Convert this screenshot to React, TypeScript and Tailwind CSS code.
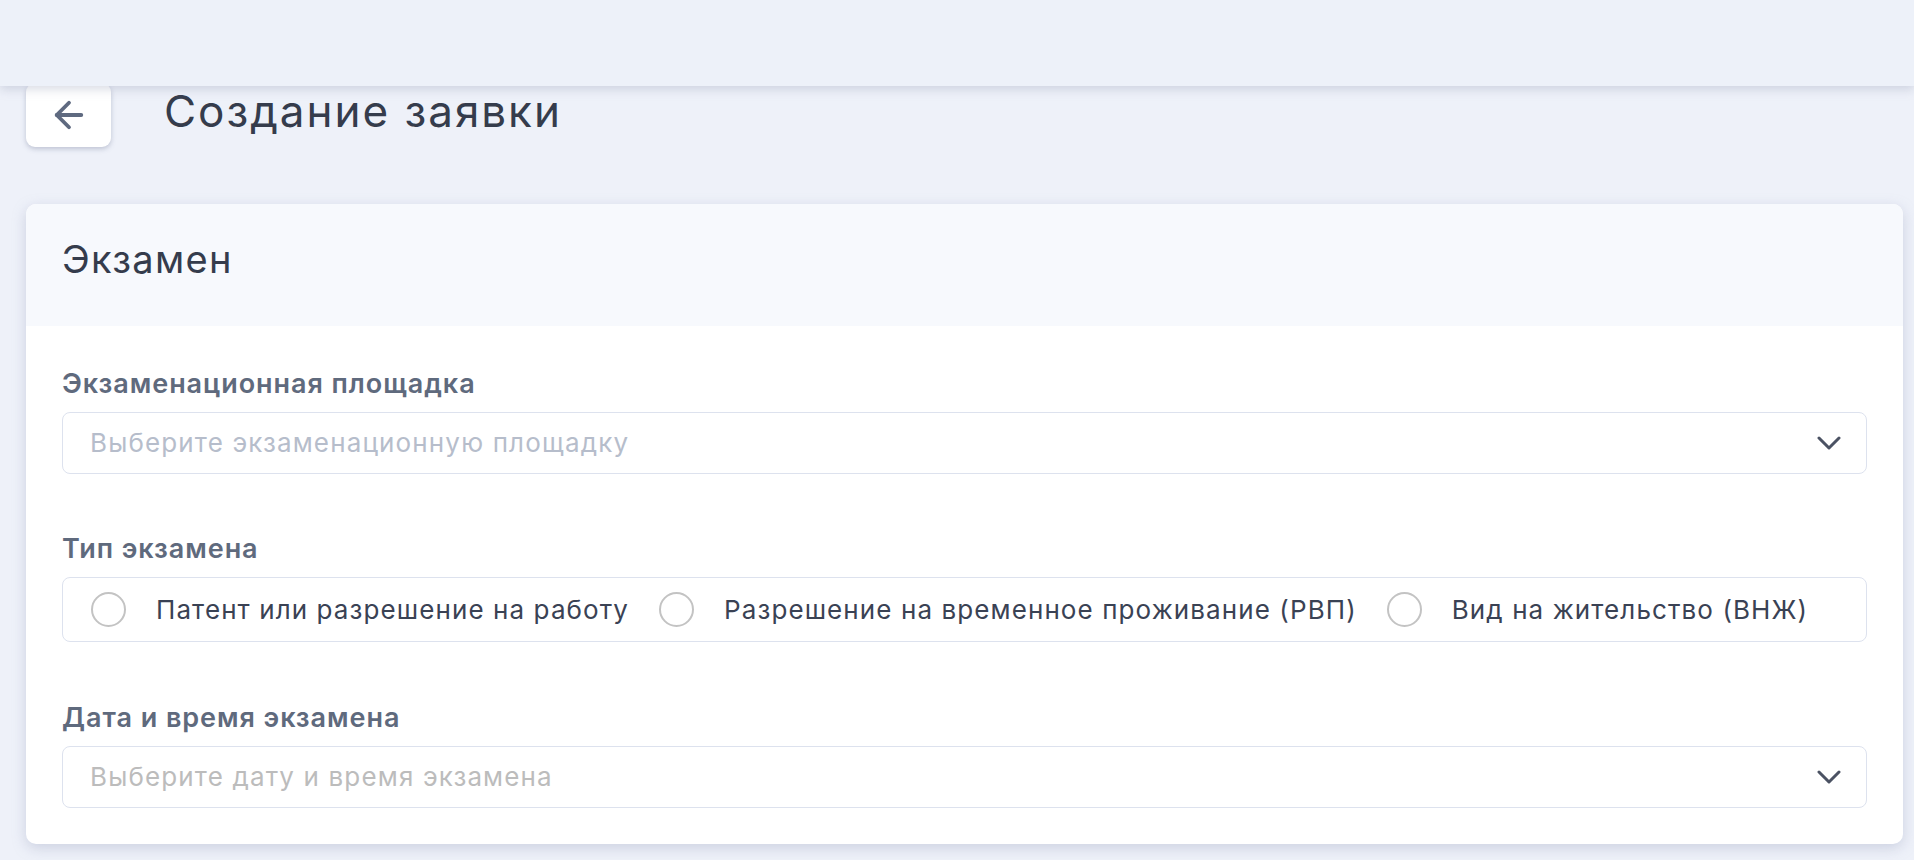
import { ArrowLeft } from 'lucide-react'

function Chevron() {
  return (
    <svg width="24" height="14" viewBox="0 0 24 14" fill="none" className="shrink-0">
      <path d="M2 2l10 10L22 2" stroke="#4b5263" strokeWidth="3" strokeLinecap="round" strokeLinejoin="round" />
    </svg>
  )
}

function Label({ children }: { children: React.ReactNode }) {
  return (
    <div className="mb-[12px] text-[27px] leading-[32px] font-semibold tracking-[0.035em] text-[#5f6a7d]">{children}</div>
  )
}

function SelectBox({ placeholder, tone }: { placeholder: string; tone: string }) {
  return (
    <div className="flex h-[62px] items-center justify-between rounded-[8px] border border-[#dde2ee] bg-white pr-[25px] pl-[27px]">
      <span className={`text-[26px] leading-[32px] tracking-[0.044em] ${tone}`}>{placeholder}</span>
      <Chevron />
    </div>
  )
}

const types = ['Патент или разрешение на работу', 'Разрешение на временное проживание (РВП)', 'Вид на жительство (ВНЖ)']

export default function App() {
  return (
    <div className="min-h-screen bg-[#eef1f9] font-['Inter',sans-serif]">
      <header className="relative z-10 h-[86px] bg-[#edf1f9] shadow-[0_3px_10px_rgba(140,150,175,0.35)]"></header>

      <main className="pr-[11px] pb-10 pl-[26px]">
        <div className="flex items-center">
          <button className="-mt-[3px] flex h-[64px] w-[85px] items-center justify-center rounded-[9px] bg-white shadow-[0_2px_5px_rgba(100,110,140,0.35)]">
            <ArrowLeft size={42} strokeWidth={2.2} color="#5f6a80" />
          </button>
          <h1 className="mb-[11px] ml-[53px] text-[44px] leading-[44px] font-normal tracking-[0.045em] text-[#353c4c]">
            Создание заявки
          </h1>
        </div>

        <section className="mt-[57px] rounded-[10px] bg-white shadow-[0_4px_14px_rgba(140,150,180,0.35)]">
          <div className="flex h-[122px] items-center rounded-t-[10px] bg-[#f7f9fd] pb-[12px] pl-[36px]">
            <h2 className="text-[38px] leading-[40px] font-normal tracking-[0.035em] text-[#353c4c]">Экзамен</h2>
          </div>

          <div className="px-[36px] pt-[42px] pb-[36px]">
            <Label>Экзаменационная площадка</Label>
            <SelectBox placeholder="Выберите экзаменационную площадку" tone="text-[#b6bdcb]" />

            <div className="mt-[59px]">
              <Label>Тип экзамена</Label>
              <div className="mt-[1px] flex h-[65px] items-center gap-[30px] rounded-[8px] border border-[#dde2ee] pl-[28px]">
                {types.map((t) => (
                  <label key={t} className="flex items-center gap-[30px]">
                    <span className="h-[35px] w-[35px] shrink-0 rounded-full border-[2.5px] border-[#c3c3c3] bg-white"></span>
                    <span className="text-[26px] leading-[32px] tracking-[0.042em] text-[#3a4254]">{t}</span>
                  </label>
                ))}
              </div>
            </div>

            <div className="mt-[60px]">
              <Label>Дата и время экзамена</Label>
              <SelectBox placeholder="Выберите дату и время экзамена" tone="text-[#bcbcbc]" />
            </div>
          </div>
        </section>
      </main>
    </div>
  )
}
